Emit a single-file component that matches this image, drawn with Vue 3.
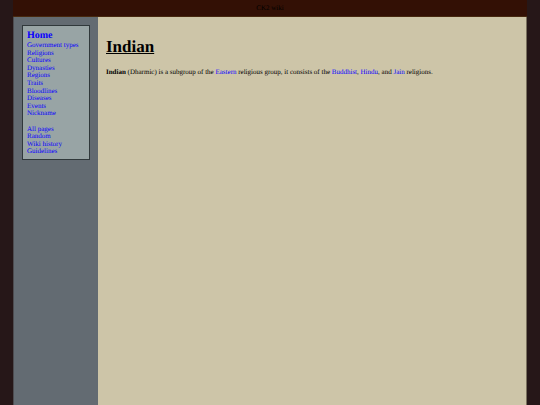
<script setup>
const sections = [
  'Government types', 'Religions', 'Cultures', 'Dynasties', 'Regions',
  'Traits', 'Bloodlines', 'Diseases', 'Events', 'Nickname',
]
const tools = ['All pages', 'Random', 'Wiki history', 'Guidelines']
</script>

<template>
  <div class="page">
    <header class="banner">CK2 wiki</header>
    <div class="body">
      <aside class="sidebar">
        <nav class="menu">
          <a class="home" href="#">Home</a>
          <ul class="links">
            <li v-for="name in sections" :key="name"><a href="#">{{ name }}</a></li>
            <li class="gap" aria-hidden="true"></li>
            <li v-for="name in tools" :key="name"><a href="#">{{ name }}</a></li>
          </ul>
        </nav>
      </aside>
      <main class="content">
        <h1>Indian</h1>
        <p>
          <b>Indian</b> (Dharmic) is a subgroup of the <a href="#">Eastern</a> religious group,
          it consists of the <a href="#">Buddhist</a>, <a href="#">Hindu</a>, and
          <a href="#">Jain</a> religions.
        </p>
      </main>
    </div>
  </div>
</template>

<style>
body {
  margin: 0;
  background: #261718;
}
</style>

<style scoped>
.page {
  display: flex;
  flex-direction: column;
  box-sizing: border-box;
  min-height: 100vh;
  margin: 0 13px;
  font-family: "Liberation Serif", "Times New Roman", serif;
  font-size: 7px;
  line-height: 8px;
  text-rendering: geometricPrecision;
  color: #000;
}

a {
  color: #0800ff;
  text-decoration: none;
}

.banner {
  padding: 4px 0;
  border-bottom: 1px solid #47280f;
  background: #331005;
  text-align: center;
}

.body {
  display: flex;
  flex: 1;
}

.sidebar {
  box-sizing: border-box;
  flex: none;
  width: 85px;
  padding: 8px;
  border-left: 1px solid #4d4c50;
  background: #636b72;
}

.menu {
  padding: 4px;
  border: 1px solid #30383b;
  background: #98a4a5;
}

.home {
  display: block;
  font-size: 10px;
  line-height: 11px;
  font-weight: bold;
}

.links {
  display: grid;
  grid-auto-rows: 1fr;
  height: 114px;
  margin: 0;
  padding: 0;
  list-style: none;
}

.links li {
  min-height: 0;
}

.content {
  flex: 1;
  padding: 20px 8px;
  border-right: 1px solid #79705d;
  background: #cdc5a8;
}

h1 {
  margin: 0 0 11px;
  font-size: 17px;
  line-height: 20px;
  text-decoration: underline;
}

p {
  margin: 0;
}
</style>
